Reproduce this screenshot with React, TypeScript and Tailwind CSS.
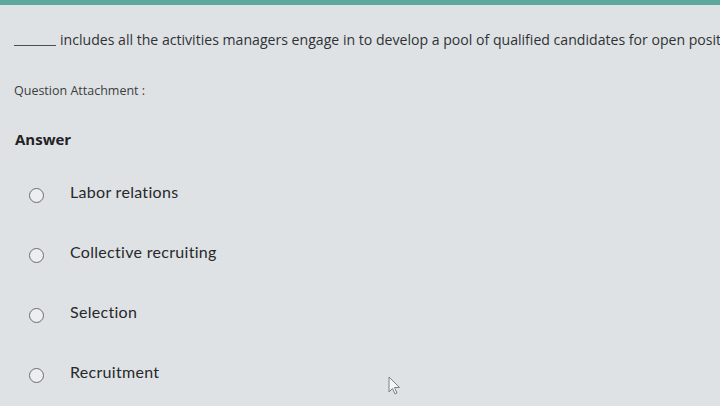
import React from 'react';

const options = ['Labor relations', 'Collective recruiting', 'Selection', 'Recruitment'];

const App: React.FC = () => {
    return (
        <div className="w-[720px] h-[406px] overflow-hidden relative bg-[#dfe2e4] text-[#2e3236]" style={{ fontFamily: '"Open Sans", "Noto Sans", sans-serif' }}>
            {/* top accent bar */}
            <div className="h-[5px] bg-[#5da79b]" />

            {/* question */}
            <div className="mt-[25px] pl-[14px] flex items-end whitespace-nowrap text-[14.1px] leading-5">
                <span className="shrink-0 inline-block w-[42px] h-px bg-[#4a4e52] mb-[4px] mr-[4px]" />
                <span>includes all the activities managers engage in to develop a pool of qualified candidates for open positions.</span>
            </div>

            <div className="mt-[32px] pl-[14px] text-[12.5px] text-[#3a3e42]">Question Attachment :</div>

            <div className="mt-[27px] pl-[15px] text-[15px] font-bold text-[#1f2326]">Answer</div>

            {/* options */}
            <div className="mt-[31px] flex flex-col gap-[38px]" style={{ fontFamily: 'Lato, "Open Sans", sans-serif' }}>
                {options.map((opt) => (
                    <div key={opt} className="flex items-center h-[22px]">
                        <span className="shrink-0 ml-[29px] w-[15px] h-[15px] rounded-full border-[1.5px] border-[#6a6e72] bg-[#eceeef] mt-[7px]" />
                        <span className="ml-[26px] text-[16px] tracking-[0.3px] text-[#26292c]">{opt}</span>
                    </div>
                ))}
            </div>

            {/* mouse cursor */}
            <svg className="absolute left-[388px] top-[376px]" width="14" height="20" viewBox="0 0 14 20">
                <path d="M1 1 L1 16 L4.5 12.5 L7 18 L9 17 L6.5 11.5 L11.5 11.5 Z" fill="#f4f5f6" stroke="#7a8088" strokeWidth="1" />
            </svg>
        </div>
    );
};

export default App;
